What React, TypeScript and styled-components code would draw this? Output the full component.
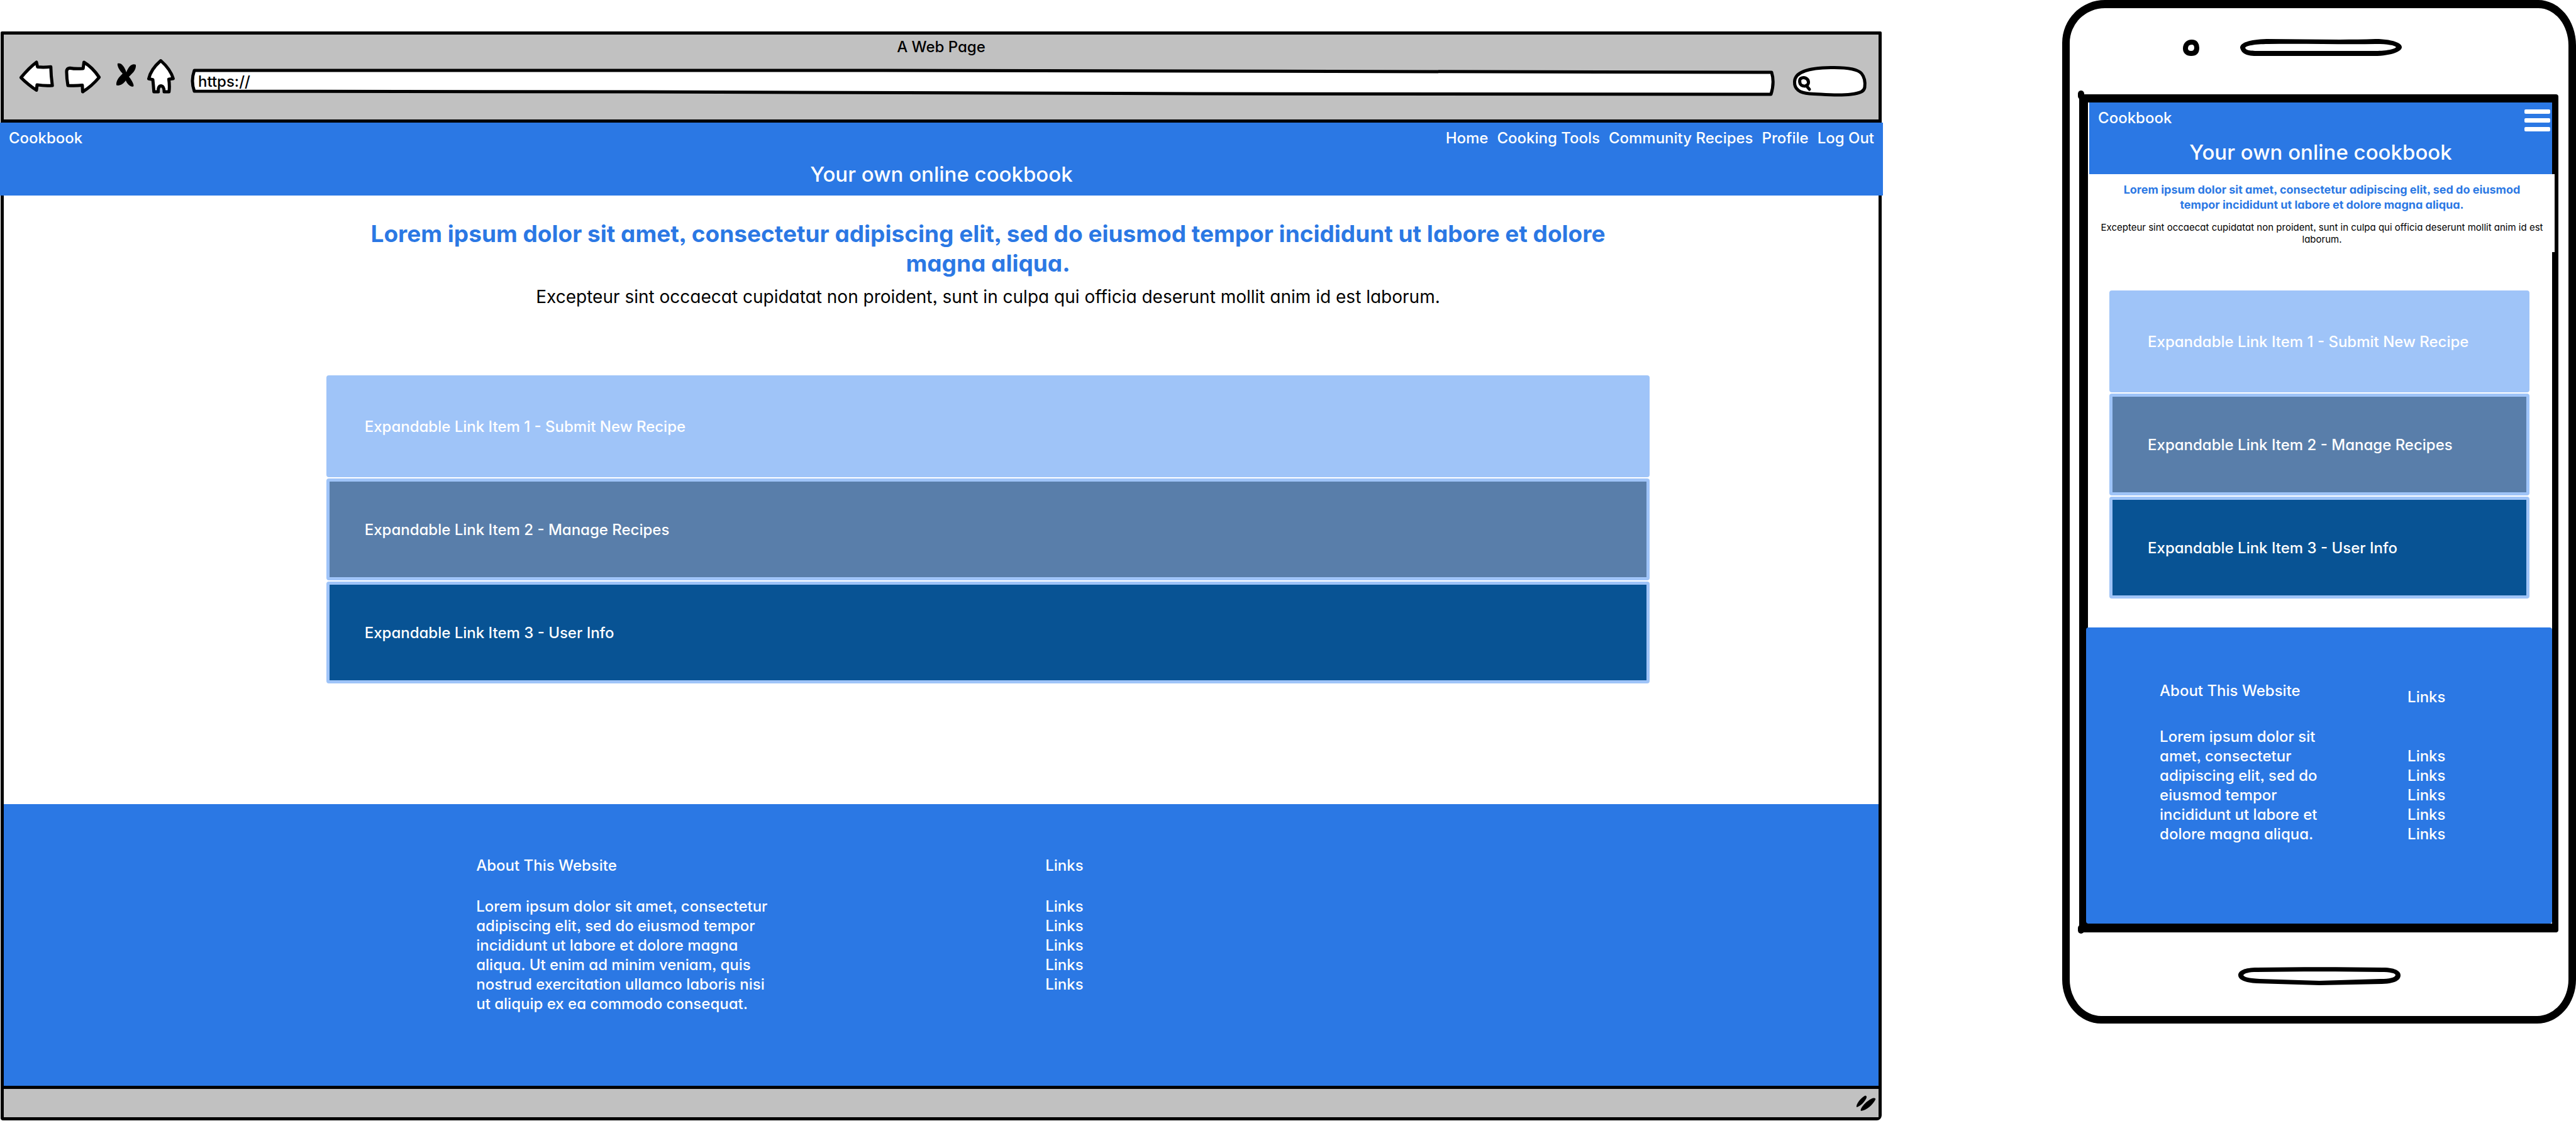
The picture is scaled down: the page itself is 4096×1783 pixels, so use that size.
import React from "react";
import styled, { createGlobalStyle } from "styled-components";

const color = {
  ink: "#000000",
  paper: "#ffffff",
  chrome: "#c1c1c1",
  brand: "#2b78e4",
  light: "#9fc4f8",
  muted: "#597eaa",
  deep: "#085394",
};

const GlobalStyle = createGlobalStyle`
  *, *::before, *::after { box-sizing: border-box; }
  body {
    margin: 0;
    background: ${color.paper};
    color: ${color.ink};
    font-family: Inter, Roboto, "Liberation Sans", sans-serif;
    font-feature-settings: "cv11", "ss03";
    font-size: 24px;
    font-weight: 500;
    line-height: 31px;
  }
  h1, h2, h3, p, ul { margin: 0; padding: 0; font-weight: inherit; }
  ul { list-style: none; }
  button, input { font: inherit; font-feature-settings: inherit; color: inherit; border: 0; padding: 0; background: none; }
  a { color: inherit; text-decoration: none; }
  svg { display: block; overflow: visible; }
`;

const Board = styled.div`
  display: flex;
  justify-content: space-between;
  align-items: flex-start;
  padding-left: 1px;
`;

/* Browser mock-up */

const BrowserWindow = styled.section`
  flex: 0 0 73.04%;
  margin-top: 50px;
  border: 5px solid ${color.ink};
  border-radius: 2px 2px 8px 4px;
  background: ${color.paper};
`;

const Chrome = styled.div`
  background: ${color.chrome};
  border-bottom: 5px solid ${color.ink};
  padding-bottom: 35px;
`;

const WindowTitle = styled.div`
  line-height: 40px;
  text-align: center;
`;

const Toolbar = styled.div`
  display: flex;
  align-items: stretch;
  gap: 24px;
  height: 60px;
  padding: 0 19px 0 22px;
`;

const ToolbarButtons = styled.div`
  display: flex;
  gap: 16px;
`;

const IconButton = styled.button`
  display: block;
  cursor: pointer;
`;

const AddressField = styled.label`
  position: relative;
  flex: 1;
  margin: 14px 0 2px;
`;

const SearchField = styled.label`
  position: relative;
  width: 117px;
  margin: 10px 0 0 5px;
`;

const FieldOutline = styled.svg`
  position: absolute;
  inset: 0;
  width: 100%;
  height: 100%;
`;

const AddressInput = styled.input`
  position: relative;
  width: 100%;
  height: 40px;
  padding: 0 12px;
  outline: none;
`;

const SearchInput = styled.input`
  position: relative;
  width: 100%;
  height: 100%;
  padding: 0 16px 0 32px;
  outline: none;
`;

const StatusBar = styled.div`
  display: flex;
  justify-content: flex-end;
  align-items: center;
  height: 50px;
  padding-right: 4px;
  border-top: 5px solid ${color.ink};
  background: ${color.chrome};
`;

/* Cookbook site, shared by both mock-ups */

const SiteHeader = styled.header<{ $compact?: boolean }>`
  margin: ${(p) => (p.$compact ? "0 0 0 2px" : "0 -7px 0 -6px")};
  padding-bottom: ${(p) => (p.$compact ? "4px" : "0")};
  background: ${color.brand};
  color: ${color.paper};
`;

const HeaderRow = styled.div<{ $compact?: boolean }>`
  display: flex;
  justify-content: space-between;
  align-items: center;
  height: 48px;
  padding: ${(p) => (p.$compact ? "0 3px 0 14px" : "0 14px")};
`;

const SiteNav = styled.nav`
  display: flex;
  gap: 14px;
`;

const Tagline = styled.h1<{ $compact?: boolean }>`
  font-size: 33px;
  line-height: ${(p) => (p.$compact ? "62px" : "68px")};
  text-align: center;
`;

const MenuButton = styled.button`
  display: flex;
  flex-direction: column;
  gap: 7px;
  width: 41px;
  margin-top: 8px;
  cursor: pointer;
`;

const MenuBar = styled.span`
  height: 7px;
  border-radius: 2px;
  background: ${color.paper};
`;

const DesktopMain = styled.main`
  width: 70.6%;
  margin-left: 17.2%;
  padding: 37px 0 192px;
`;

const PhoneMain = styled.main`
  padding-bottom: 46px;
`;

const Intro = styled.div<{ $compact?: boolean }>`
  margin: ${(p) => (p.$compact ? "0 -4px 61px 2px" : "0 0 108px")};
  padding: ${(p) => (p.$compact ? "13px 10px 11px" : "0")};
  background: ${color.paper};
  text-align: center;
`;

const Headline = styled.h2<{ $compact?: boolean }>`
  max-width: ${(p) => (p.$compact ? "680px" : "2000px")};
  margin: 0 auto;
  color: ${color.brand};
  font-size: ${(p) => (p.$compact ? "18px" : "37px")};
  font-weight: 700;
  line-height: ${(p) => (p.$compact ? "24px" : "47px")};
`;

const Lead = styled.p<{ $compact?: boolean }>`
  margin-top: ${(p) => (p.$compact ? "14px" : "13px")};
  font-size: ${(p) => (p.$compact ? "15px" : "28px")};
  font-weight: 400;
  line-height: ${(p) => (p.$compact ? "19px" : "34px")};
`;

const ItemList = styled.ul<{ $compact?: boolean }>`
  display: grid;
  gap: 2px;
  margin: ${(p) => (p.$compact ? "0 36px 0 34px" : "0")};
`;

const ItemButton = styled.button<{ $fill: string }>`
  display: block;
  width: 100%;
  height: 162px;
  padding: 0 56px;
  border: 5px solid ${color.light};
  border-radius: 4px;
  background: ${(p) => p.$fill};
  color: ${color.paper};
  text-align: left;
  cursor: pointer;
`;

const DesktopFooter = styled.footer`
  display: grid;
  grid-template-columns: 475px auto;
  column-gap: 430px;
  padding: 82px 0 115px 25.2%;
  background: ${color.brand};
  color: ${color.paper};
`;

const PhoneFooter = styled.footer`
  display: grid;
  grid-template-columns: 264px auto;
  column-gap: 130px;
  margin-left: -3px;
  padding: 85px 0 127px 117px;
  border-radius: 4px;
  background: ${color.brand};
  color: ${color.paper};
`;

const FooterColumn = styled.div<{ $gap: number; $drop?: number }>`
  display: flex;
  flex-direction: column;
  gap: ${(p) => p.$gap}px;
  padding-top: ${(p) => p.$drop ?? 0}px;
`;

const FooterTitle = styled.h3`
  font-size: 24px;
`;

/* Phone mock-up */

const PhoneBody = styled.section`
  flex: 0 0 19.95%;
  border: solid ${color.ink};
  border-width: 13px 12px 12px;
  border-radius: 68px 60px 62px 62px / 68px 72px 70px 70px;
  background: ${color.paper};
`;

const PhoneTop = styled.div`
  display: flex;
  align-items: center;
  gap: 65px;
  height: 137px;
  padding: 0 0 12px 22.7%;
`;

const PhoneScreen = styled.div`
  position: relative;
  margin: 0 16px 0 15px;
  border: solid ${color.ink};
  border-width: 13px 10px 14px 14px;
  border-radius: 4px;
  &::before, &::after {
    content: "";
    position: absolute;
    left: -16px;
    width: 10px;
    height: 14px;
    border-radius: 5px;
    background: ${color.ink};
  }
  &::before { top: -19px; }
  &::after { bottom: -16px; }
`;

const PhoneBottom = styled.div`
  display: flex;
  justify-content: center;
  align-items: center;
  height: 133px;
  padding-top: 5px;
`;

const items = [
  { label: "Expandable Link Item 1 - Submit New Recipe", fill: color.light },
  { label: "Expandable Link Item 2 - Manage Recipes", fill: color.muted },
  { label: "Expandable Link Item 3 - User Info", fill: color.deep },
];
const navLinks = ["Home", "Cooking Tools", "Community Recipes", "Profile", "Log Out"];
const footerLinks = ["Links", "Links", "Links", "Links", "Links"];

const ink = {
  fill: color.paper,
  stroke: color.ink,
  strokeWidth: 5,
  strokeLinejoin: "round" as const,
  strokeLinecap: "round" as const,
};

const BackIcon = () => (
  <svg width="60" height="60" viewBox="28 95 60 60">
    <path {...ink} d="M33.4 123.4 Q46 108 58 99 L59.7 106.5 Q70 107.5 80.8 106.2 Q81 120 83.2 136 Q72 137 58.9 134.9 L58 143.5 Q44 134 33.4 123.4 Z" />
  </svg>
);
const ForwardIcon = () => (
  <svg width="56" height="60" viewBox="104 95 56 60">
    <path {...ink} d="M157.7 123 Q147 107 133.5 99 L132.2 109 Q120 110 111 108.2 Q106 108.5 105.9 114 Q106 125 108 136 Q120 136.8 130.9 135.5 L131.4 146 Q146 137 157.7 123 Z" />
  </svg>
);
const StopIcon = () => (
  <svg width="42" height="60" viewBox="176 95 42 60">
    <path fill={color.ink} d="M187 101 C193 99 198 106 201 115 C204 106 210 100 216 103 C217 112 209 118 205 122 C210 128 214 136 212 137.5 C207 139 202 133 200 128 C196 134 190 137 185 135.5 C184 128 190 122 195 117 C189 111 186 104 187 101 Z" />
  </svg>
);
const HomeIcon = () => (
  <svg width="45" height="60" viewBox="234 95 45 60">
    <path {...ink} d="M255.7 96.5 Q271 110 275.4 125 L268.4 126 Q270 136 268.8 146 L261 146 Q261 137 256 136.5 Q251 137 251.7 146 L244.7 146 Q244 136 243 126.6 L236.5 125.3 Q240 110 255.7 96.5 Z" />
  </svg>
);
const GripIcon = () => (
  <svg width="32" height="26" viewBox="0 0 32 26">
    <path fill={color.ink} d="M1 19 C0 14 8 4 14 1 C17 0 18 3 16 6 C12 13 6 18 1 19 Z M8 25 C6 21 16 10 24 6 C28 4 32 4 31 7 C27 15 17 24 8 25 Z" />
  </svg>
);
const CameraIcon = () => (
  <svg width="26" height="26" viewBox="0 0 26 26">
    <path fill={color.paper} stroke={color.ink} strokeWidth="8" d="M4 14 C4 8 8 4 14 4 C20 4 22 8 22 13 C22 19 19 22 13 22 C7 22 4 19 4 14 Z" />
  </svg>
);
const SpeakerIcon = () => (
  <svg width="257" height="27" viewBox="0 0 257 27">
    <path fill={color.ink} d="M42 0 C100 0 160 2 215 0 C240 0 257 6 257 13 C257 20 240 26 218 27 L22 27 C6 26 2 21 0 14 C0 6 14 1 42 0 Z" />
    <path fill={color.paper} d="M45 8 C100 7 160 9 216 8 C234 8 246 10 248 13 C246 16 232 19 216 19 L30 19 C12 19 9 17 8 14 C9 11 22 8 45 8 Z" />
  </svg>
);
const HomeKeyIcon = () => (
  <svg width="258" height="29" viewBox="0 0 258 29">
    <path fill={color.ink} d="M30 1 C95 0 165 0 230 1 C248 1 258 6 258 13 C258 21 250 26 228 27 L129 29 L30 26 C10 25 0 20 0 13 C0 6 10 1 30 1 Z" />
    <path fill={color.paper} d="M30 8 C95 7 165 7 226 8 C242 8 250 10 250 13 C249 17 240 19 226 19 L129 22 L34 19 C16 18 9 16 8 13 C10 10 16 8 30 8 Z" />
  </svg>
);

const Items = ({ compact }: { compact?: boolean }) => (
  <ItemList $compact={compact}>
    {items.map((item) => (
      <li key={item.label}>
        <ItemButton type="button" $fill={item.fill}>{item.label}</ItemButton>
      </li>
    ))}
  </ItemList>
);

const IntroText = ({ compact }: { compact?: boolean }) => (
  <Intro $compact={compact}>
    <Headline $compact={compact}>
      Lorem ipsum dolor sit amet, consectetur adipiscing elit, sed do eiusmod tempor incididunt ut labore et dolore magna aliqua.
    </Headline>
    <Lead $compact={compact}>
      Excepteur sint occaecat cupidatat non proident, sunt in culpa qui officia deserunt mollit anim id est laborum.
    </Lead>
  </Intro>
);

const FooterColumns = ({ about, gap, linksGap, drop }: { about: string; gap: number; linksGap: number; drop?: number }) => (
  <>
    <FooterColumn $gap={gap}>
      <FooterTitle>About This Website</FooterTitle>
      <p>{about}</p>
    </FooterColumn>
    <FooterColumn $gap={linksGap} $drop={drop}>
      <FooterTitle>Links</FooterTitle>
      <ul>
        {footerLinks.map((label, i) => (
          <li key={i}><a href="#links">{label}</a></li>
        ))}
      </ul>
    </FooterColumn>
  </>
);

const Desktop = () => (
  <BrowserWindow>
    <Chrome>
      <WindowTitle>A Web Page</WindowTitle>
      <Toolbar>
        <ToolbarButtons>
          <IconButton type="button" aria-label="Back"><BackIcon /></IconButton>
          <IconButton type="button" aria-label="Forward"><ForwardIcon /></IconButton>
          <IconButton type="button" aria-label="Stop"><StopIcon /></IconButton>
          <IconButton type="button" aria-label="Home page"><HomeIcon /></IconButton>
        </ToolbarButtons>
        <AddressField>
          <FieldOutline viewBox="0 0 2519 44" preserveAspectRatio="none">
            <path {...ink} d="M6 3 L1100 3 L2514 6 Q2519 22 2513 41 L1600 40 L700 37 L6 36 Q0 20 6 3 Z" />
          </FieldOutline>
          <AddressInput type="text" aria-label="Address" defaultValue="https://" />
        </AddressField>
        <SearchField>
          <FieldOutline viewBox="0 0 117 50">
            <path {...ink} d="M26 44 C10 43 2 36 2.5 25 C3 10 22 3 60 2.5 C88 2 104 6 109 12 C114 18 115 26 114 34 C113 40 108 43 92 45 C70 48 50 45 26 44 Z" />
            <path {...ink} d="M12 20 C17 17 25 19 24.5 27 C23 34 12 33 11 27 C10 23 11 21 12 20 Z M21 31 L26 37" />
          </FieldOutline>
          <SearchInput type="text" aria-label="Search" />
        </SearchField>
      </Toolbar>
    </Chrome>
    <SiteHeader>
      <HeaderRow>
        <a href="#home">Cookbook</a>
        <SiteNav>
          {navLinks.map((label) => (
            <a key={label} href="#nav">{label}</a>
          ))}
        </SiteNav>
      </HeaderRow>
      <Tagline>Your own online cookbook</Tagline>
    </SiteHeader>
    <DesktopMain>
      <IntroText />
      <Items />
    </DesktopMain>
    <DesktopFooter>
      <FooterColumns
        gap={34}
        linksGap={34}
        about="Lorem ipsum dolor sit amet, consectetur adipiscing elit, sed do eiusmod tempor incididunt ut labore et dolore magna aliqua. Ut enim ad minim veniam, quis nostrud exercitation ullamco laboris nisi ut aliquip ex ea commodo consequat."
      />
    </DesktopFooter>
    <StatusBar><GripIcon /></StatusBar>
  </BrowserWindow>
);

const Phone = () => (
  <PhoneBody>
    <PhoneTop>
      <CameraIcon />
      <SpeakerIcon />
    </PhoneTop>
    <PhoneScreen>
      <SiteHeader $compact>
        <HeaderRow $compact>
          <a href="#home">Cookbook</a>
          <MenuButton type="button" aria-label="Menu">
            <MenuBar />
            <MenuBar />
            <MenuBar />
          </MenuButton>
        </HeaderRow>
        <Tagline $compact>Your own online cookbook</Tagline>
      </SiteHeader>
      <PhoneMain>
        <IntroText compact />
        <Items compact />
      </PhoneMain>
      <PhoneFooter>
        <FooterColumns
          gap={42}
          linksGap={63}
          drop={10}
          about="Lorem ipsum dolor sit amet, consectetur adipiscing elit, sed do eiusmod tempor incididunt ut labore et dolore magna aliqua."
        />
      </PhoneFooter>
    </PhoneScreen>
    <PhoneBottom>
      <HomeKeyIcon />
    </PhoneBottom>
  </PhoneBody>
);

export default function App() {
  return (
    <>
      <GlobalStyle />
      <Board>
        <Desktop />
        <Phone />
      </Board>
    </>
  );
}
